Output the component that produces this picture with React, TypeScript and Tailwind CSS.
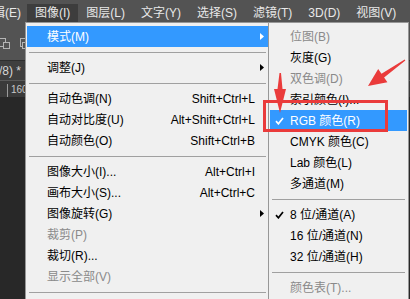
import React from "react";

type Row =
  | { sep: true }
  | {
      label: string;
      shortcut?: string;
      arrow?: boolean;
      disabled?: boolean;
      active?: boolean;
      checked?: boolean;
    };

const mainMenu: Row[] = [
  { label: "模式(M)", arrow: true, active: true },
  { sep: true },
  { label: "调整(J)", arrow: true },
  { sep: true },
  { label: "自动色调(N)", shortcut: "Shift+Ctrl+L" },
  { label: "自动对比度(U)", shortcut: "Alt+Shift+Ctrl+L" },
  { label: "自动颜色(O)", shortcut: "Shift+Ctrl+B" },
  { sep: true },
  { label: "图像大小(I)...", shortcut: "Alt+Ctrl+I" },
  { label: "画布大小(S)...", shortcut: "Alt+Ctrl+C" },
  { label: "图像旋转(G)", arrow: true },
  { label: "裁剪(P)", disabled: true },
  { label: "裁切(R)..." },
  { label: "显示全部(V)", disabled: true },
  { sep: true },
  { label: "复制(D)..." },
];

const modeMenu: Row[] = [
  { label: "位图(B)", disabled: true },
  { label: "灰度(G)" },
  { label: "双色调(D)", disabled: true },
  { label: "索引颜色(I)..." },
  { label: "RGB 颜色(R)", checked: true, active: true },
  { label: "CMYK 颜色(C)" },
  { label: "Lab 颜色(L)" },
  { label: "多通道(M)" },
  { sep: true },
  { label: "8 位/通道(A)", checked: true },
  { label: "16 位/通道(N)" },
  { label: "32 位/通道(H)" },
  { sep: true },
  { label: "颜色表(T)...", disabled: true },
];

const menuBar = ["辑(E)", "图像(I)", "图层(L)", "文字(Y)", "选择(S)", "滤镜(T)", "3D(D)", "视图(V)"];

function Arrow({ white }: { white?: boolean }) {
  return (
    <svg width="4" height="7" viewBox="0 0 4 7" className="shrink-0">
      <polygon points="0,0 4,3.5 0,7" fill={white ? "#ffffff" : "#000000"} />
    </svg>
  );
}

function Check({ white }: { white?: boolean }) {
  return (
    <svg width="9" height="8" viewBox="0 0 9 8">
      <polyline
        points="1,4.2 3.4,6.8 8,1"
        fill="none"
        stroke={white ? "#ffffff" : "#000000"}
        strokeWidth="1.7"
      />
    </svg>
  );
}

function Sep() {
  return (
    <div className="h-[10px] flex items-center mx-[3px]">
      <div className="w-full border-t border-[#a0a0a0]" />
    </div>
  );
}

function MainMenu() {
  return (
    <div className="absolute left-[25px] top-[22px] w-[245px] h-[290px] bg-[#f0f0f0] border border-[#979797] pt-[3px]">
      {mainMenu.map((r, i) =>
        "sep" in r ? (
          <Sep key={i} />
        ) : (
          <div
            key={i}
            className={`h-[21px] mx-[1px] pl-[20px] flex items-center ${
              r.active ? "bg-[#3399ff] text-white" : r.disabled ? "text-[#8a8a8a]" : "text-black"
            }`}
          >
            <span className="flex-1">{r.label}</span>
            {r.shortcut && <span className="mr-[13px]">{r.shortcut}</span>}
            {r.arrow && (
              <span className="mr-[4px] flex">
                <Arrow white={r.active} />
              </span>
            )}
          </div>
        )
      )}
    </div>
  );
}

function ModeMenu() {
  return (
    <div className="absolute left-[268px] top-[22px] w-[141px] h-[290px] bg-[#f0f0f0] border border-[#979797] pt-[3px]">
      {modeMenu.map((r, i) =>
        "sep" in r ? (
          <Sep key={i} />
        ) : (
          <div
            key={i}
            className={`h-[21px] mx-[1px] flex items-center ${
              r.active ? "bg-[#3399ff] text-white" : r.disabled ? "text-[#8a8a8a]" : "text-black"
            }`}
          >
            <span className="w-[20px] pl-[5px] flex items-center">
              {r.checked && <Check white={r.active} />}
            </span>
            <span>{r.label}</span>
          </div>
        )
      )}
    </div>
  );
}

export default function App() {
  return (
    <div
      className="relative w-[410px] h-[299px] overflow-hidden bg-[#282828] text-[12px] leading-none"
      style={{ fontFamily: '"Liberation Sans", "Noto Sans CJK SC", sans-serif' }}
    >
      {/* menu bar */}
      <div className="h-[22px] bg-[#535353] flex items-end text-[#e8e8e8]">
        {menuBar.map((m, i) => (
          <div
            key={m}
            className={`h-[18px] px-[8px] flex items-center ${i === 0 ? "ml-[-15px] mr-[-2px]" : ""} ${
              i === 1 ? "bg-[#3d3d3d]" : ""
            }`}
          >
            {m}
          </div>
        ))}
      </div>

      {/* options bar */}
      <div className="h-[38px] bg-[#535353] flex items-center pt-[6px]">
        <svg width="30" height="14" viewBox="0 0 30 14">
          <rect x="-3.5" y="1.5" width="9" height="8" fill="none" stroke="#b4b4b4" />
          <rect x="3.5" y="5.5" width="6" height="6" fill="#535353" stroke="#b4b4b4" />
          <rect x="20.5" y="1.5" width="9" height="8" fill="none" stroke="#b4b4b4" />
          <rect x="22.5" y="5.5" width="6" height="6" fill="#535353" stroke="#b4b4b4" />
        </svg>
      </div>

      {/* document tab */}
      <div className="h-[20px] bg-[#3f3f3f] border-t border-[#2e2e2e] flex items-center text-[#d6d6d6]">
        <span className="ml-[-1px]">/8) *</span>
      </div>

      {/* ruler */}
      <div className="h-[17px] bg-[#3a3a3a] border-t border-[#5a5a5a] flex items-end text-[10px] text-[#c8c8c8]">
        <div className="w-px h-[13px] bg-[#9a9a9a] ml-[7px]" />
        <span className="ml-[3px] mb-[2px]">160</span>
      </div>

      <MainMenu />
      <ModeMenu />

      {/* annotations */}
      <svg className="absolute left-0 top-0 pointer-events-none" width="410" height="299" viewBox="0 0 410 299">
        <rect x="264.5" y="101.5" width="122" height="29" fill="none" stroke="#ea3b3b" strokeWidth="3" />
        <polygon points="279.5,73 281,73 282.5,89 286,89 280,113 274,89 277.5,89" fill="#ea3b3b" />
        <polygon
          points="404.65,59.51 405.35,60.49 384.1,77.4 387.4,82.2 368,86 378.2,69 381.5,73.8"
          fill="#ea3b3b"
        />
      </svg>
    </div>
  );
}
